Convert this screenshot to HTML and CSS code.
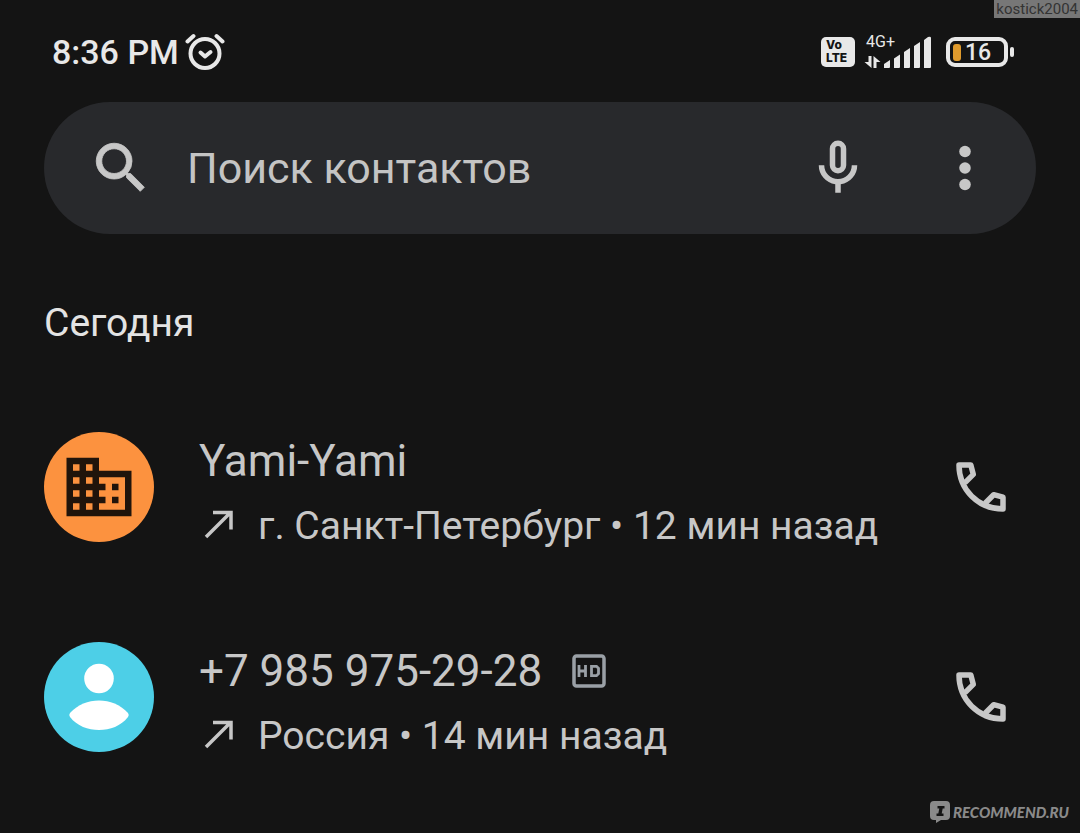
FILE: index.html
```html
<!DOCTYPE html>
<html lang="ru">
<head>
    <meta charset="UTF-8">
    <meta name="viewport" content="width=device-width, initial-scale=1.0">
    <title>Контакты</title>
    <link rel="stylesheet" href="styles.css">
</head>
<body>

<header class="status-bar">
    <span class="time">8:36 PM</span>
    <svg class="alarm" width="40" height="40" viewBox="0 0 40 40" fill="none" stroke="#e8e8e8" stroke-linecap="round" stroke-linejoin="round">
        <circle cx="20" cy="21.5" r="14.5" stroke-width="4"/>
        <path d="M2.500 9.500L8.500 4M37.500 9.500L31.500 4" stroke-width="4"/>
        <path d="M15.500 20.500L20 24.500L25.500 20" stroke-width="4"/>
    </svg>
    <div class="indicators">
        <span class="volte"><span>Vo</span><span>LTE</span></span>
        <svg class="signal" width="68" height="42" viewBox="0 -4 68 42" fill="#e8e8e8">
            <text x="2" y="12">4G+</text>
            <path d="M4.500 21h3v12l-7-6h4zM9.500 33V21l7 6h-4v6z"/>
            <path d="M20 33v-4l6-4v7a1 1 0 0 1-1 1zM30 33V23.500l6-4V32a1 1 0 0 1-1 1zM40 33V17l6-4v19a1 1 0 0 1-1 1zM50 33V11l6-4v25a1 1 0 0 1-1 1zM60 33V5l4-3q3-1 3 1v29a1 1 0 0 1-1 1z"/>
        </svg>
        <span class="battery"><span class="level"></span>16</span>
    </div>
</header>

<form class="search">
    <svg class="icon" viewBox="0 0 24 24"><path d="M15.500 14h-.79l-.28-.27A6.471 6.471 0 0 0 16 9.500 6.500 6.500 0 1 0 9.500 16c1.610 0 3.090-.59 4.230-1.570l.27.28v.79l5 4.990L20.490 19l-4.990-5zm-6 0C7.010 14 5 11.990 5 9.500S7.010 5 9.500 5 14 7.010 14 9.500 11.990 14 9.500 14z" stroke="#c7c7c7" stroke-width=".3"/></svg>
    <input type="text" placeholder="Поиск контактов" aria-label="Поиск контактов">
    <button type="button" aria-label="Голосовой поиск">
        <svg class="icon" viewBox="0 0 24 24" fill-rule="evenodd"><path d="M12 2a3 3 0 0 0-3 3v6a3 3 0 0 0 6 0V5a3 3 0 0 0-3-3zm0 2a1 1 0 0 0-1 1v6a1 1 0 0 0 2 0V5a1 1 0 0 0-1-1z"/><path d="M5 11h2a5 5 0 0 0 10 0h2a7 7 0 0 1-6 6.920V21h-2v-3.080A7 7 0 0 1 5 11z"/></svg>
    </button>
    <button type="button" aria-label="Меню">
        <svg class="icon" viewBox="0 0 24 24"><circle cx="12" cy="6" r="2.100"/><circle cx="12" cy="12" r="2.100"/><circle cx="12" cy="18" r="2.100"/></svg>
    </button>
</form>

<main>
    <h2>Сегодня</h2>

    <ul class="calls">
        <li class="call">
            <span class="avatar orange">
                <svg width="78" height="78" viewBox="0 0 24 24" fill="#20140b"><path d="M12 7V3H2v18h20V7H12zM6 19H4v-2h2v2zm0-4H4v-2h2v2zm0-4H4V9h2v2zm0-4H4V5h2v2zm4 12H8v-2h2v2zm0-4H8v-2h2v2zm0-4H8V9h2v2zm0-4H8V5h2v2zm10 12h-8v-2h2v-2h-2v-2h2v-2h-2V9h8v10zm-2-8h-2v2h2v-2zm0 4h-2v2h2v-2z"/></svg>
            </span>
            <div class="info">
                <div class="name">Yami-Yami</div>
                <div class="details">
                    <svg class="arrow" viewBox="0 0 30 30"><path d="M2 26L27 1M9 1.500h18v17"/></svg>
                    <span>г. Санкт-Петербург • 12 мин назад</span>
                </div>
            </div>
            <button type="button" class="dial" aria-label="Позвонить Yami-Yami">
                <svg class="icon phone" viewBox="0 0 24 24"><path d="M6.200 10.400L9.200 7.400L8.300 4H4C4 13 11 20 20 20V15.700L16.600 14.800L13.600 17.800"/></svg>
            </button>
        </li>
        <li class="call">
            <span class="avatar blue">
                <svg width="110" height="110" viewBox="0 0 110 110" fill="#fff"><circle cx="55" cy="36.500" r="14.800"/><path d="M26 71C34 62.500 44 58.500 55 58.500S76 62.500 84 71Q85.500 73 84 75C77 84 66 88 55 88S33 84 26 75Q24.500 73 26 71z"/></svg>
            </span>
            <div class="info">
                <div class="name">+7 985 975-29-28
                    <svg class="hd" width="34" height="34" viewBox="0 0 34 34" fill="none" stroke="#9aa0a6" role="img" aria-label="HD"><rect x="2" y="2" width="30" height="30" rx="2.500" stroke-width="3.500"/><path d="M7 11v12M13.500 11v12M7 17h6.500M19.500 12.300h5l2 2v5.400l-2 2h-5z" stroke-width="2.800"/></svg>
                </div>
                <div class="details">
                    <svg class="arrow" viewBox="0 0 30 30"><path d="M2 26L27 1M9 1.500h18v17"/></svg>
                    <span>Россия • 14 мин назад</span>
                </div>
            </div>
            <button type="button" class="dial" aria-label="Позвонить +7 985 975-29-28">
                <svg class="icon phone" viewBox="0 0 24 24"><path d="M6.200 10.400L9.200 7.400L8.300 4H4C4 13 11 20 20 20V15.700L16.600 14.800L13.600 17.800"/></svg>
            </button>
        </li>
    </ul>
</main>

<div class="user-tag">kostick2004</div>
<div class="watermark">
    <svg width="20" height="24" viewBox="0 0 20 24"><path fill="#8a8a8a" d="M4 1h12q4 0 4 4v11q0 4-4 4h-5l-5 3v-3H4q-4 0-4-4V5q0-4 4-4z"/><path d="M7.500 6h7v2.500h-1.800l-1 5h1.800V16h-7v-2.500h1.800l1-5H7.500z" fill="#141414"/></svg>
    <span>RECOMMEND.RU</span>
</div>

</body>
</html>
```
FILE: styles.css
```css
* {
    box-sizing: border-box;
}
body {
    margin: 0;
    min-height: 100vh;
    position: relative;
    background-color: #141414;
    color: #c7c7c7;
    font-family: Roboto, "Noto Sans", sans-serif;
}
button {
    display: flex;
    align-items: center;
    padding: 0;
    border: none;
    background: none;
    cursor: pointer;
}

/* status bar */
.status-bar {
    display: flex;
    align-items: center;
    height: 102px;
    padding: 2px 72px 0 52px;
    color: #e8e8e8;
}
.time {
    font-size: 34px;
    font-weight: 500;
}
.alarm {
    margin-left: 6px;
}
.indicators {
    display: flex;
    align-items: center;
    margin-left: auto;
}
.volte {
    display: flex;
    flex-direction: column;
    gap: 1px;
    width: 34px;
    height: 30px;
    padding: 2px 5px;
    border-radius: 5px;
    background-color: #e8e8e8;
    color: #141414;
    font-family: Inter, sans-serif;
    font-size: 12px;
    font-weight: 800;
    line-height: 12px;
}
.signal {
    margin: 0 14px 0 9px;
}
.signal text {
    font-size: 16px;
}
.battery {
    position: relative;
    display: flex;
    align-items: center;
    gap: 4px;
    width: 62px;
    height: 30px;
    padding-left: 3px;
    border: 4px solid #e8e8e8;
    border-radius: 9px;
    font-size: 23px;
    font-weight: 500;
}
.battery::after {
    content: "";
    position: absolute;
    right: -10px;
    top: 6px;
    width: 4px;
    height: 10px;
    border-radius: 2px;
    background-color: #e8e8e8;
}
.level {
    width: 8px;
    height: 17px;
    border-radius: 3px;
    background-color: #e09b2d;
}

/* search */
.search {
    display: flex;
    align-items: center;
    height: 132px;
    margin: 0 44px;
    padding: 0 38px 0 44px;
    border-radius: 66px;
    background-color: #28292c;
}
.search input {
    flex: 1;
    min-width: 0;
    padding: 0 0 0 33px;
    border: none;
    outline: none;
    background: none;
    color: #c7c7c7;
    font-family: inherit;
    font-size: 43px;
}
.search input::placeholder {
    color: #c4c4c4;
    opacity: 1;
}
.search button + button {
    margin-left: 61px;
}
.icon {
    display: block;
    flex: none;
    width: 66px;
    height: 66px;
    fill: #c7c7c7;
}

/* calls */
h2 {
    margin: 64px 44px 0;
    color: #e3e3e3;
    font-size: 39px;
    font-weight: 400;
    line-height: 50px;
}
.calls {
    margin: 34px 0 0;
    padding: 0;
    list-style: none;
}
.call {
    display: flex;
    align-items: flex-start;
    padding: 50px 66px 30px 44px;
}
.avatar {
    display: flex;
    flex: none;
    align-items: center;
    justify-content: center;
    width: 110px;
    height: 110px;
    border-radius: 50%;
}
.orange {
    background-color: #fc923f;
}
.blue {
    background-color: #4dcfe7;
}
.info {
    flex: 1;
    margin-left: 45px;
}
.name {
    display: flex;
    align-items: center;
    gap: 30px;
    font-size: 44px;
    line-height: 58px;
}
.details {
    display: flex;
    align-items: center;
    gap: 24px;
    padding-left: 5px;
    font-size: 39px;
    line-height: 72px;
}
.arrow {
    width: 30px;
    height: 30px;
    fill: none;
    stroke: #c7c7c7;
    stroke-width: 3.5;
    overflow: visible;
}
.dial {
    height: 110px;
}
.phone {
    fill: none;
    stroke: #c7c7c7;
    stroke-width: 2;
    stroke-linejoin: round;
}

/* overlays */
.user-tag {
    position: absolute;
    top: 0;
    right: 0;
    padding: 0 2px;
    background-color: #777;
    color: #333;
    font-size: 15px;
    line-height: 18px;
}
.watermark {
    position: absolute;
    right: 11px;
    bottom: 9px;
    display: flex;
    align-items: center;
    gap: 3px;
    color: #8a8a8a;
    font-family: Lato, sans-serif;
    font-size: 15px;
    font-style: italic;
    font-weight: 900;
}
```
